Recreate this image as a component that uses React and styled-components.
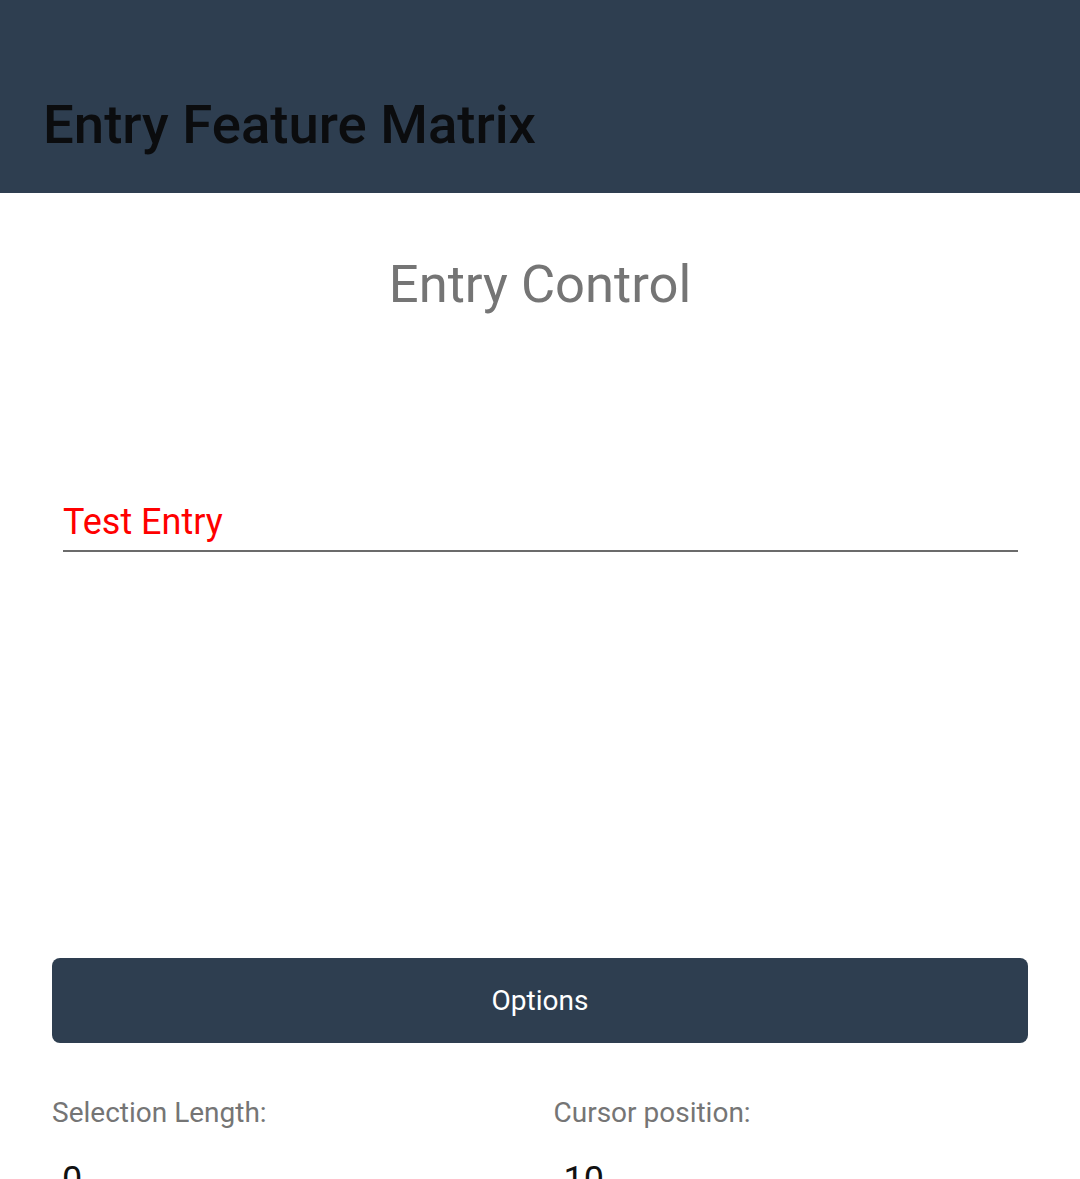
import React from 'react';
import styled, { createGlobalStyle } from 'styled-components';

const GlobalStyle = createGlobalStyle`
  html, body {
    margin: 0;
    padding: 0;
    background: #ffffff;
    font-family: Roboto, "Liberation Sans", sans-serif;
  }
`;

const Page = styled.div`
  width: 1080px;
  height: 1179px;
  overflow: hidden;
  display: flex;
  flex-direction: column;
`;

const Toolbar = styled.header`
  flex-shrink: 0;
  height: 193px;
  background: #2e3e50;
  display: flex;
  align-items: flex-end;
  padding: 0 43px 42px;
  box-sizing: border-box;
`;

const ToolbarTitle = styled.h1`
  margin: 0;
  font-size: 54.5px;
  font-weight: 500;
  color: #0b0c0e;
  line-height: 1;
`;

const Content = styled.main`
  flex-shrink: 0;
  display: flex;
  flex-direction: column;
  padding: 0 52px;
`;

const PageTitle = styled.h2`
  margin: 58px 0 0;
  text-align: center;
  font-size: 52.5px;
  font-weight: 400;
  color: #757575;
  line-height: 66px;
`;

const EntryField = styled.div`
  margin: 183px 10px 0 11px;
  border-bottom: 2px solid #6b6b6b;
  padding-bottom: 6px;
`;

const EntryText = styled.div`
  font-size: 36px;
  color: #ff0000;
  line-height: 44px;
`;

const OptionsButton = styled.button`
  flex-shrink: 0;
  margin-top: 406px;
  height: 85px;
  border: none;
  border-radius: 8px;
  background: #2e3e50;
  color: #ffffff;
  font-family: Roboto, "Liberation Sans", sans-serif;
  font-size: 28px;
`;

const StatsGrid = styled.div`
  display: grid;
  grid-template-columns: 1fr 1fr;
  column-gap: 27px;
  margin-top: 52px;
`;

const Stat = styled.div`
  display: flex;
  flex-direction: column;
`;

const StatLabel = styled.div`
  font-size: 28px;
  color: #757575;
  line-height: 36px;
`;

const StatValue = styled.div`
  margin-top: 27px;
  padding-left: 10px;
  font-size: 36px;
  color: #111111;
  line-height: 44px;
`;

export default function App() {
  return (
    <Page>
      <GlobalStyle />
      <Toolbar>
        <ToolbarTitle>Entry Feature Matrix</ToolbarTitle>
      </Toolbar>
      <Content>
        <PageTitle>Entry Control</PageTitle>
        <EntryField>
          <EntryText>Test Entry</EntryText>
        </EntryField>
        <OptionsButton>Options</OptionsButton>
        <StatsGrid>
          <Stat>
            <StatLabel>Selection Length:</StatLabel>
            <StatValue>0</StatValue>
          </Stat>
          <Stat>
            <StatLabel>Cursor position:</StatLabel>
            <StatValue>10</StatValue>
          </Stat>
        </StatsGrid>
      </Content>
    </Page>
  );
}
